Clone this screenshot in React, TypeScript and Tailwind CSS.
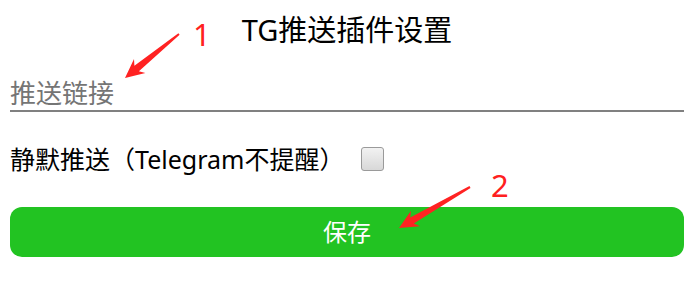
import * as React from "react"

type Pt = [number, number]

// tapered annotation arrow, thin at the tail, barbed head at the tip
function arrowPoints(tail: Pt, tip: Pt) {
  const dx = tip[0] - tail[0]
  const dy = tip[1] - tail[1]
  const len = Math.hypot(dx, dy)
  const ux = dx / len
  const uy = dy / len
  const nx = -uy
  const ny = ux
  const at = (back: number, side: number): string =>
    `${(tip[0] - ux * back + nx * side).toFixed(1)},${(tip[1] - uy * back + ny * side).toFixed(1)}`
  return [
    at(len, 1),
    at(15, 3.6),
    at(19, 9),
    at(0, 0),
    at(19, -9),
    at(15, -3.6),
    at(len, -1),
  ].join(" ")
}

export default function App() {
  const [silent, setSilent] = React.useState(false)
  const [link, setLink] = React.useState("")

  return (
    <div
      className="relative h-[283px] w-[694px] overflow-hidden bg-white px-[10px] text-black"
      style={{ fontFamily: '"Noto Sans", "Noto Sans CJK SC", sans-serif' }}
    >
      <h1 className="mt-[13px] text-center text-[29px] font-normal leading-[34px]">TG推送插件设置</h1>

      <input
        value={link}
        onChange={(e: React.ChangeEvent<HTMLInputElement>) => setLink(e.target.value)}
        placeholder="推送链接"
        className="mt-[29px] block h-[36px] w-full border-b-2 border-[#808080] bg-transparent p-0 text-[26px] leading-[34px] outline-none placeholder:text-[#757575]"
      />

      <label className="mt-[29px] flex h-[36px] items-center text-[25px] leading-[36px]">
        <span>静默推送（Telegram不提醒）</span>
        <span
          onClick={() => setSilent(!silent)}
          className="ml-[17px] flex h-[24px] w-[23px] items-center justify-center rounded-[3px] border border-[#9a9a9a] bg-gradient-to-b from-[#f2f2f2] to-[#d8d8d8] text-[16px] leading-none"
        >
          {silent ? "✓" : ""}
        </span>
      </label>

      <button className="mt-[30px] block h-[50px] w-full rounded-[12px] bg-[#22c322] text-[24px] leading-[50px] text-white">
        保存
      </button>

      <svg className="pointer-events-none absolute left-0 top-0" width={694} height={283}>
        <polygon points={arrowPoints([179, 34], [125, 78])} fill="#ff2222" />
        <polygon points={arrowPoints([470, 187], [399, 228])} fill="#ff2222" />
      </svg>
      <span className="pointer-events-none absolute left-[193px] top-[14px] text-[31px] leading-[40px] text-[#ff2020]">1</span>
      <span className="pointer-events-none absolute left-[491px] top-[165px] text-[31px] leading-[40px] text-[#ff2020]">2</span>
    </div>
  )
}
